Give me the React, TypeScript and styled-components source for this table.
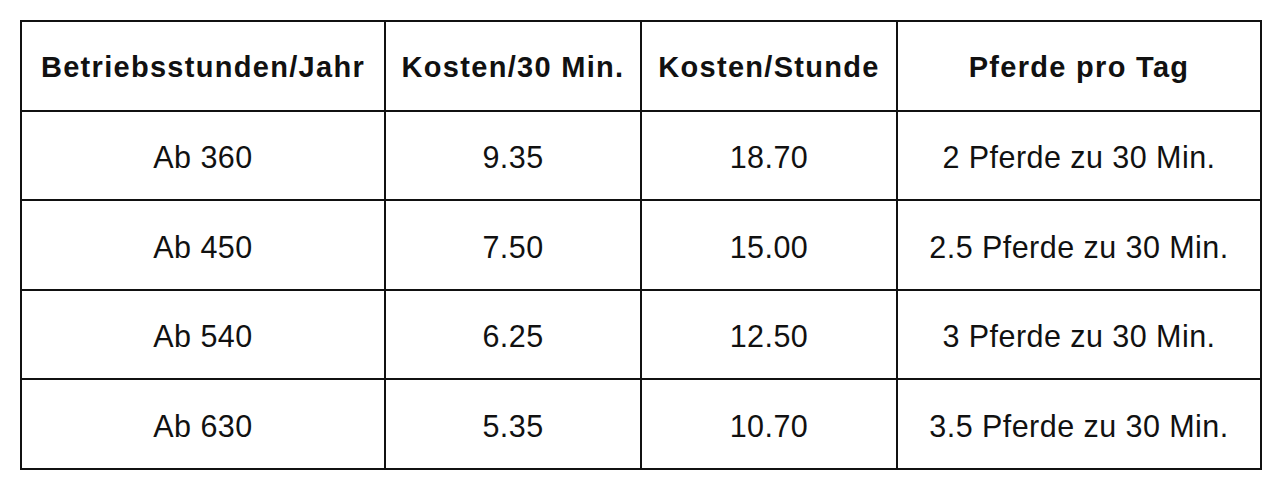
import React from 'react';
import styled, { createGlobalStyle } from 'styled-components';

const GlobalStyle = createGlobalStyle`
  html, body {
    margin: 0;
    padding: 0;
    background: #ffffff;
  }
  body {
    font-family: "Liberation Sans", Arial, sans-serif;
    color: #111111;
  }
`;

const Page = styled.div`
  padding: 20px 19px 20px 20px;
`;

const Table = styled.table`
  width: 100%;
  border-collapse: collapse;
  table-layout: fixed;
  border: 2px solid #111111;
`;

const Col = styled.col<{ $w: number }>`
  width: ${p => p.$w}px;
`;

const Row = styled.tr`
  height: 89.5px;
`;

const HeadCell = styled.th`
  border: 2px solid #111111;
  font-size: 29px;
  font-weight: 700;
  letter-spacing: 1.3px;
  text-align: center;
  vertical-align: middle;
  padding: 4px 0 0;
  white-space: nowrap;
`;

const Cell = styled.td`
  border: 2px solid #111111;
  font-size: 30.5px;
  font-weight: 400;
  letter-spacing: 0.45px;
  text-align: center;
  vertical-align: middle;
  padding: 5px 0 0;
  white-space: nowrap;
`;

const headers = ['Betriebsstunden/Jahr', 'Kosten/30 Min.', 'Kosten/Stunde', 'Pferde pro Tag'];

const rows = [
  ['Ab 360', '9.35', '18.70', '2 Pferde zu 30 Min.'],
  ['Ab 450', '7.50', '15.00', '2.5 Pferde zu 30 Min.'],
  ['Ab 540', '6.25', '12.50', '3 Pferde zu 30 Min.'],
  ['Ab 630', '5.35', '10.70', '3.5 Pferde zu 30 Min.'],
];

const App = () => {
  return (
    <Page>
      <GlobalStyle />
      <Table>
        <colgroup>
          <Col $w={364} />
          <Col $w={256} />
          <Col $w={256} />
          <Col $w={364} />
        </colgroup>
        <thead>
          <Row>
            {headers.map(h => (
              <HeadCell key={h}>{h}</HeadCell>
            ))}
          </Row>
        </thead>
        <tbody>
          {rows.map(r => (
            <Row key={r[0]}>
              {r.map((c, i) => (
                <Cell key={i}>{c}</Cell>
              ))}
            </Row>
          ))}
        </tbody>
      </Table>
    </Page>
  );
};

export default App;
